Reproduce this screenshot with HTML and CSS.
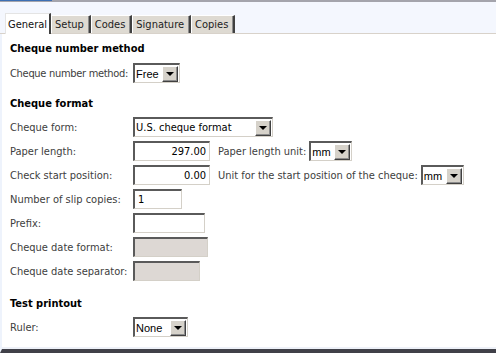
FILE: index.html
```html
<!DOCTYPE html>
<html lang="en">
<head>
    <meta charset="UTF-8">
    <title>Cheque settings</title>
    <link rel="stylesheet" href="styles.css">
</head>
<body>
    <div class="window">
        <div class="tab-strip">
            <div class="tab tab-active">General</div>
            <div class="tab">Setup</div>
            <div class="tab">Codes</div>
            <div class="tab">Signature</div>
            <div class="tab">Copies</div>
        </div>

        <div class="panel">
            <div class="section section-method">
                <div class="section-title">Cheque number method</div>
                <div class="row">
                    <span class="label label-tight">Cheque number method:</span>
                    <div class="combo w-free"><span class="combo-text">Free</span><span class="combo-btn"></span></div>
                </div>
            </div>

            <div class="section section-format">
                <div class="section-title">Cheque format</div>
                <div class="row">
                    <span class="label">Cheque form:</span>
                    <div class="combo w-form"><span class="combo-text">U.S. cheque format</span><span class="combo-btn"></span></div>
                </div>
                <div class="row">
                    <span class="label">Paper length:</span>
                    <div class="field field-num w-num">297.00</div>
                    <span class="label-inline">Paper length unit:</span>
                    <div class="combo w-unit"><span class="combo-text">mm</span><span class="combo-btn"></span></div>
                </div>
                <div class="row">
                    <span class="label">Check start position:</span>
                    <div class="field field-num w-num">0.00</div>
                    <span class="label-inline">Unit for the start position of the cheque:</span>
                    <div class="combo w-unit"><span class="combo-text">mm</span><span class="combo-btn"></span></div>
                </div>
                <div class="row">
                    <span class="label">Number of slip copies:</span>
                    <div class="field w-copies">1</div>
                </div>
                <div class="row">
                    <span class="label">Prefix:</span>
                    <div class="field w-prefix"></div>
                </div>
                <div class="row">
                    <span class="label">Cheque date format:</span>
                    <div class="field field-disabled w-datefmt"></div>
                </div>
                <div class="row">
                    <span class="label">Cheque date separator:</span>
                    <div class="field field-disabled w-datesep"></div>
                </div>
            </div>

            <div class="section section-test">
                <div class="section-title">Test printout</div>
                <div class="row">
                    <span class="label">Ruler:</span>
                    <div class="combo w-ruler"><span class="combo-text">None</span><span class="combo-btn"></span></div>
                </div>
            </div>
        </div>
    </div>
</body>
</html>
```

FILE: styles.css
```css
* {
    margin: 0;
    padding: 0;
    box-sizing: border-box;
}

body {
    font-family: 'DejaVu Sans Condensed', 'DejaVu Sans', sans-serif;
    font-size: 11px;
    color: #404040;
    background: #ffffff;
}

.window {
    display: flex;
    flex-direction: column;
    height: 353px;
}

/* Tab strip */
.tab-strip {
    position: relative;
    display: flex;
    align-items: flex-end;
    height: 34px;
    padding-left: 5px;
    background: #f4f7fe;
    border-top: 2px solid #a4a4ac;
    border-bottom: 1px solid #d8d2ca;
}

.tab-strip::before {
    content: '';
    position: absolute;
    top: -2px;
    left: 0;
    width: 52px;
    height: 1px;
    background: #3c6fb4;
}

.tab {
    height: 18px;
    line-height: 17px;
    padding: 0 5px 0 3px;
    white-space: nowrap;
    background: #dedad2;
    color: #222;
    border-top: 1px solid #ffffff;
    border-left: 1px solid #ffffff;
    border-right: 2px solid #404040;
    box-shadow: inset -1px 0 0 #8c8c8c;
}

.tab-active {
    height: 21px;
    line-height: 21px;
    margin-bottom: -1px;
    padding: 0 2px 0 2px;
    background: #ffffff;
    color: #111;
    border-left: 1px solid #e4e4e4;
    border-top: 1px solid #e4e4e4;
    box-shadow: none;
}

/* Page body */
.panel {
    flex: 1;
    padding: 8px 0 0 8px;
    background: #ffffff;
    border-left: 2px solid #eef3fc;
    border-bottom: 4px solid #404048;
    box-shadow: inset 0 -2px 0 #eef1f8;
}

.section-format {
    margin-top: 14px;
}

.section-test {
    margin-top: 16px;
}

.section-title {
    height: 14px;
    line-height: 14px;
    font-size: 11px;
    font-weight: bold;
    color: #000;
    margin-bottom: 6px;
    white-space: nowrap;
}

.section-method .section-title {
    margin-bottom: 7px;
}

.row {
    display: flex;
    align-items: center;
    height: 20px;
    margin-bottom: 4px;
    white-space: nowrap;
}

.label {
    width: 123px;
    flex-shrink: 0;
}

.label-tight {
    letter-spacing: -0.3px;
}

.label-inline {
    margin: 0 3px 0 8px;
}

/* Sunken edit fields */
.field {
    height: 20px;
    padding: 0 3px;
    line-height: 17px;
    background: #ffffff;
    color: #000;
    border-top: 2px solid #5a5a5a;
    border-left: 2px solid #5a5a5a;
    border-right: 1px solid #d4d0c8;
    border-bottom: 1px solid #d4d0c8;
}

.field-num {
    text-align: right;
}

.field-disabled {
    background: #ddd8d4;
}

/* Combo boxes */
.combo {
    display: flex;
    align-items: center;
    height: 20px;
    background: #ffffff;
    color: #000;
    border-top: 2px solid #5a5a5a;
    border-left: 2px solid #5a5a5a;
    border-right: 1px solid #d4d0c8;
    border-bottom: 1px solid #d4d0c8;
}

.combo-text {
    flex: 1;
    padding-left: 1px;
    font-family: 'Liberation Sans', Arial, sans-serif;
}

.w-form .combo-text {
    font-family: 'DejaVu Sans Condensed', 'DejaVu Sans', sans-serif;
}

.combo-btn {
    position: relative;
    width: 16px;
    height: 16px;
    margin-right: 1px;
    background: #d6d2ca;
    border-top: 1px solid #ffffff;
    border-left: 1px solid #ffffff;
    border-right: 1px solid #404040;
    border-bottom: 1px solid #404040;
    box-shadow: inset -1px -1px 0 #8c8c8c;
}

.combo-btn::after {
    content: '';
    position: absolute;
    left: 3px;
    top: 5px;
    border-left: 4px solid transparent;
    border-right: 4px solid transparent;
    border-top: 4px solid #000;
}

.w-free { width: 47px; }
.w-form { width: 140px; }
.w-unit { width: 43px; }
.w-ruler { width: 55px; }
.w-num { width: 77px; }
.w-copies { width: 49px; }
.w-prefix { width: 72px; }
.w-datefmt { width: 75px; }
.w-datesep { width: 67px; }
```
